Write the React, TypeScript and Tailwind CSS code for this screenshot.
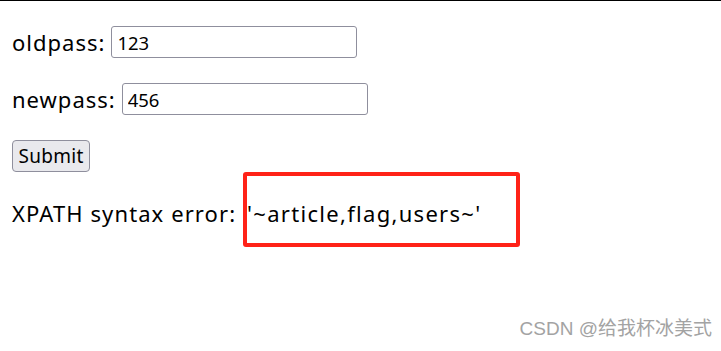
export default function App() {
  return (
    <div className="relative h-[351px] w-[721px] overflow-hidden border-t border-black bg-white text-black font-['Noto_Sans','Open_Sans',sans-serif]">
      <div className="flex flex-col gap-[25px] px-3 pt-[25px]">
        {/* old password */}
        <div className="flex h-8 items-center gap-[6px] text-[22px] tracking-[1px]">
          <span>oldpass:</span>
          <input
            defaultValue="123"
            className="h-8 w-[246px] rounded-[3px] border border-[#8f8f9d] px-[5px] text-[18.5px] tracking-normal outline-none"
          />
        </div>

        {/* new password */}
        <div className="flex h-8 items-center gap-[6px] text-[22px] tracking-[1px]">
          <span>newpass:</span>
          <input
            defaultValue="456"
            className="h-8 w-[246px] rounded-[3px] border border-[#8f8f9d] px-[5px] text-[18.5px] tracking-normal outline-none"
          />
        </div>

        <div className="flex h-8">
          <button className="h-8 w-[78px] rounded-[4px] border border-[#8f8f9d] bg-[#e9e9ed] text-[19px] tracking-[0.3px]">
            Submit
          </button>
        </div>

        <div className="-mt-[25px] flex items-baseline text-[22px] tracking-[1.1px]">
          <span className="whitespace-pre">XPATH syntax error: </span>
          <span className="flex h-[75px] w-[277px] shrink-0 items-center rounded-[3px] border-4 border-[#ff2218] pt-[7px] tracking-[1.3px]">
            '~article,flag,users~'
          </span>
        </div>
      </div>

      <div className="absolute bottom-[8px] right-[9px] text-[19px] text-[#a3a3a3] font-['Liberation_Sans','Noto_Sans_CJK_SC',sans-serif]">
        CSDN @给我杯冰美式
      </div>
    </div>
  );
}
